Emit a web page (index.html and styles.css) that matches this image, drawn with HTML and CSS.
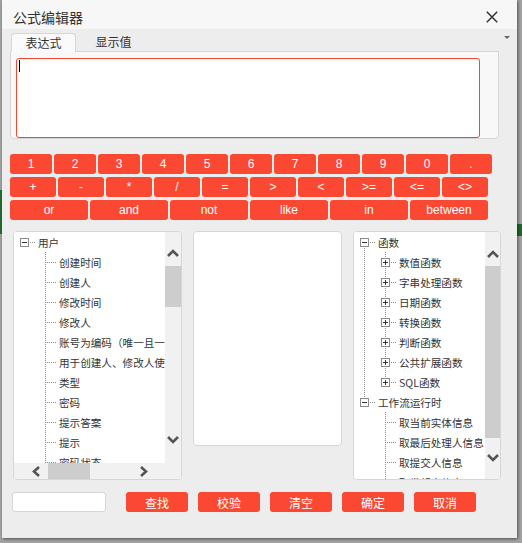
FILE: index.html
```html
<!DOCTYPE html>
<html lang="zh-CN">
<head>
<meta charset="utf-8">
<title>公式编辑器</title>
<link rel="stylesheet" href="styles.css">
</head>
<body>
<svg class="defs" width="0" height="0" aria-hidden="true">
  <defs>
    <symbol id="t-line" viewBox="0 0 21 20">
      <path class="dot" d="M10.5 0V20"/>
    </symbol>
    <symbol id="t-leaf" viewBox="0 0 21 20">
      <path class="dot" d="M10.5 0V20M12 10.5H21"/>
    </symbol>
    <symbol id="t-root" viewBox="0 0 21 20">
      <path class="dot" d="M16 10.5H21"/>
      <rect class="box" x="6.5" y="6.5" width="8" height="8"/>
      <path class="sign" d="M8 10.5H13"/>
    </symbol>
    <symbol id="t-root-first" viewBox="0 0 21 20">
      <path class="dot" d="M16 10.5H21M10.5 16V20"/>
      <rect class="box" x="6.5" y="6.5" width="8" height="8"/>
      <path class="sign" d="M8 10.5H13"/>
    </symbol>
    <symbol id="t-minus-bottom" viewBox="0 0 21 20">
      <path class="dot" d="M16 10.5H21M10.5 0V6"/>
      <rect class="box" x="6.5" y="6.5" width="8" height="8"/>
      <path class="sign" d="M8 10.5H13"/>
    </symbol>
    <symbol id="t-plus-mid" viewBox="0 0 21 20">
      <path class="dot" d="M16 10.5H21M10.5 0V6M10.5 16V20"/>
      <rect class="box" x="6.5" y="6.5" width="8" height="8"/>
      <path class="sign" d="M8 10.5H13M10.5 8V13"/>
    </symbol>
    <symbol id="t-plus-bottom" viewBox="0 0 21 20">
      <path class="dot" d="M16 10.5H21M10.5 0V6"/>
      <rect class="box" x="6.5" y="6.5" width="8" height="8"/>
      <path class="sign" d="M8 10.5H13M10.5 8V13"/>
    </symbol>
    <symbol id="ch-up" viewBox="0 0 12 8">
      <polyline class="chev" points="1,7 6,2 11,7"/>
    </symbol>
    <symbol id="ch-down" viewBox="0 0 12 8">
      <polyline class="chev" points="1,1 6,6 11,1"/>
    </symbol>
    <symbol id="ch-left" viewBox="0 0 8 11">
      <polyline class="chev" points="7,1 2,5.5 7,10"/>
    </symbol>
    <symbol id="ch-right" viewBox="0 0 8 11">
      <polyline class="chev" points="1,1 6,5.5 1,10"/>
    </symbol>
  </defs>
</svg>

<div class="dialog">
  <div class="titlebar">
    <span class="title">公式编辑器</span>
    <svg class="close" width="12" height="12" viewBox="0 0 12 12"><path d="M0.8 0.8L11.2 11.2M11.2 0.8L0.8 11.2"/></svg>
  </div>

  <div class="tabs">
    <div class="tab active">表达式</div>
    <div class="tab second">显示值</div>
    <span class="caret"></span>
  </div>

  <div class="expr">
    <div class="editor"><span class="cursor"></span></div>
  </div>

  <div class="keys">
    <div class="row r11">
      <button class="key">1</button><button class="key">2</button><button class="key">3</button><button class="key">4</button><button class="key">5</button><button class="key">6</button><button class="key">7</button><button class="key">8</button><button class="key">9</button><button class="key">0</button><button class="key">.</button>
    </div>
    <div class="row r10">
      <button class="key">+</button><button class="key">-</button><button class="key">*</button><button class="key">/</button><button class="key">=</button><button class="key">&gt;</button><button class="key">&lt;</button><button class="key">&gt;=</button><button class="key">&lt;=</button><button class="key">&lt;&gt;</button>
    </div>
    <div class="row r6">
      <button class="key">or</button><button class="key">and</button><button class="key">not</button><button class="key">like</button><button class="key">in</button><button class="key">between</button>
    </div>
  </div>

  <div class="lists">
    <div class="panel left">
      <div class="tree">
        <div class="node"><svg><use href="#t-root"/></svg><span>用户</span></div>
        <div class="node"><svg></svg><svg><use href="#t-leaf"/></svg><span>创建时间</span></div>
        <div class="node"><svg></svg><svg><use href="#t-leaf"/></svg><span>创建人</span></div>
        <div class="node"><svg></svg><svg><use href="#t-leaf"/></svg><span>修改时间</span></div>
        <div class="node"><svg></svg><svg><use href="#t-leaf"/></svg><span>修改人</span></div>
        <div class="node"><svg></svg><svg><use href="#t-leaf"/></svg><span>账号为编码（唯一且一致）</span></div>
        <div class="node"><svg></svg><svg><use href="#t-leaf"/></svg><span>用于创建人、修改人使用</span></div>
        <div class="node"><svg></svg><svg><use href="#t-leaf"/></svg><span>类型</span></div>
        <div class="node"><svg></svg><svg><use href="#t-leaf"/></svg><span>密码</span></div>
        <div class="node"><svg></svg><svg><use href="#t-leaf"/></svg><span>提示答案</span></div>
        <div class="node"><svg></svg><svg><use href="#t-leaf"/></svg><span>提示</span></div>
        <div class="node"><svg></svg><svg><use href="#t-leaf"/></svg><span>密码状态</span></div>
      </div>
      <div class="vbar vbar-left">
        <svg class="cv"><use href="#ch-up"/></svg>
        <div class="thumb"></div>
        <div class="grow"></div>
        <svg class="cv"><use href="#ch-down"/></svg>
      </div>
      <div class="hbar">
        <svg class="ch"><use href="#ch-left"/></svg>
        <div class="hthumb"></div>
        <div class="grow"></div>
        <svg class="ch"><use href="#ch-right"/></svg>
      </div>
      <div class="corner"></div>
    </div>

    <div class="panel mid"></div>

    <div class="panel right">
      <div class="tree">
        <div class="node"><svg><use href="#t-root-first"/></svg><span>函数</span></div>
        <div class="node"><svg><use href="#t-line"/></svg><svg><use href="#t-plus-mid"/></svg><span>数值函数</span></div>
        <div class="node"><svg><use href="#t-line"/></svg><svg><use href="#t-plus-mid"/></svg><span>字串处理函数</span></div>
        <div class="node"><svg><use href="#t-line"/></svg><svg><use href="#t-plus-mid"/></svg><span>日期函数</span></div>
        <div class="node"><svg><use href="#t-line"/></svg><svg><use href="#t-plus-mid"/></svg><span>转换函数</span></div>
        <div class="node"><svg><use href="#t-line"/></svg><svg><use href="#t-plus-mid"/></svg><span>判断函数</span></div>
        <div class="node"><svg><use href="#t-line"/></svg><svg><use href="#t-plus-mid"/></svg><span>公共扩展函数</span></div>
        <div class="node"><svg><use href="#t-line"/></svg><svg><use href="#t-plus-bottom"/></svg><span>SQL函数</span></div>
        <div class="node"><svg><use href="#t-minus-bottom"/></svg><span>工作流运行时</span></div>
        <div class="node"><svg></svg><svg><use href="#t-leaf"/></svg><span>取当前实体信息</span></div>
        <div class="node"><svg></svg><svg><use href="#t-leaf"/></svg><span>取最后处理人信息</span></div>
        <div class="node"><svg></svg><svg><use href="#t-leaf"/></svg><span>取提交人信息</span></div>
        <div class="node"><svg></svg><svg><use href="#t-leaf"/></svg><span>取发起人信息</span></div>
      </div>
      <div class="vbar vbar-right">
        <svg class="cv"><use href="#ch-up"/></svg>
        <div class="thumb"></div>
        <div class="grow"></div>
        <svg class="cv"><use href="#ch-down"/></svg>
      </div>
    </div>
  </div>

  <div class="footer">
    <input class="search" type="text">
    <button class="key btn">查找</button>
    <button class="key btn">校验</button>
    <button class="key btn">清空</button>
    <button class="key btn">确定</button>
    <button class="key btn">取消</button>
  </div>
</div>
</body>
</html>
```

FILE: styles.css
```css
html, body {
  margin: 0;
  padding: 0;
}

body {
  width: 522px;
  height: 543px;
  overflow: hidden;
  background:
    linear-gradient(#1e6a2c, #1e6a2c) no-repeat 517px 224px / 5px 12px,
    linear-gradient(#276c31, #276c31) no-repeat 0 190px / 2px 44px,
    #a3a3a3;
  font-family: "Liberation Sans", "Noto Sans CJK SC", sans-serif;
}

.defs {
  position: absolute;
  width: 0;
  height: 0;
  overflow: hidden;
}

.dot {
  fill: none;
  stroke: #8c8c8c;
  stroke-width: 1;
  stroke-dasharray: 1 1;
}

.box {
  fill: #fff;
  stroke: #8a8a8a;
  stroke-width: 1;
}

.sign {
  fill: none;
  stroke: #333;
  stroke-width: 1;
}

.chev {
  fill: none;
  stroke: #555;
  stroke-width: 2.6;
}

.dialog {
  margin-left: 2px;
  width: 515px;
  height: 538px;
  background: #ededed;
  box-shadow: 1px 1px 3px rgba(0, 0, 0, 0.5);
  display: flex;
  flex-direction: column;
  box-sizing: border-box;
}

.titlebar {
  height: 29px;
  flex: none;
  box-sizing: border-box;
  background: #f7f7f7;
  display: flex;
  align-items: center;
  justify-content: space-between;
  padding: 4px 19px 0 11px;
}

.title {
  font-family: "Noto Sans CJK SC", sans-serif;
  font-size: 14px;
  color: #333;
}

.close path {
  fill: none;
  stroke: #333;
  stroke-width: 1.5;
}

.tabs {
  height: 22px;
  flex: none;
  display: flex;
  align-items: flex-end;
  padding-left: 9px;
}

.tab {
  width: 65px;
  height: 18px;
  box-sizing: border-box;
  font-family: "Noto Sans CJK SC", sans-serif;
  font-size: 12px;
  color: #333;
  text-align: center;
  line-height: 18px;
}

.tab.active {
  height: 19px;
  margin-bottom: -1px;
  position: relative;
  z-index: 1;
  background: #fafafa;
  border: 1px solid #d6d6d6;
  border-bottom: none;
  border-radius: 4px 4px 0 0;
  line-height: 18px;
}

.tab.second {
  margin-left: 5px;
}

.caret {
  margin-left: auto;
  margin-right: 7px;
  align-self: flex-start;
  margin-top: 7px;
  width: 0;
  height: 0;
  border-left: 3px solid transparent;
  border-right: 3px solid transparent;
  border-top: 3px solid #666;
}

.expr {
  margin-left: 8px;
  width: 489px;
  height: 88px;
  flex: none;
  box-sizing: border-box;
  border: 1px solid #d6d6d6;
  border-radius: 0 0 4px 4px;
  background: #f8f8f8;
  padding: 6px 0 0 5px;
}

.editor {
  width: 464px;
  height: 80px;
  box-sizing: border-box;
  border: 1px solid #f4472f;
  border-radius: 3px;
  background: #fff;
  padding: 1px 0 0 2px;
}

.cursor {
  display: block;
  width: 1px;
  height: 12px;
  background: #000;
}

.keys {
  margin-top: 15px;
  padding-left: 8px;
  display: flex;
  flex-direction: column;
  gap: 3px;
}

.row {
  display: flex;
  gap: 2px;
}

.key {
  height: 20px;
  margin: 0;
  padding: 0;
  border: 0;
  border-radius: 3px;
  background: #fa4832;
  color: #fff;
  font-family: "Liberation Sans", "Noto Sans CJK SC", sans-serif;
  font-size: 12px;
  display: flex;
  align-items: center;
  justify-content: center;
}

.r11 .key { width: 42px; }
.r10 .key { width: 46px; }
.r6 .key { width: 78px; }

.lists {
  margin-top: 11px;
  padding-left: 11px;
  display: flex;
  align-items: flex-start;
  gap: 11px;
}

.panel {
  border: 1px solid #d6d6d6;
  border-radius: 4px;
  background: #fff;
  box-sizing: border-box;
  overflow: hidden;
}

.left {
  width: 169px;
  height: 249px;
  display: grid;
  grid-template-columns: 151px 16px;
  grid-template-rows: 231px 16px;
}

.mid {
  width: 149px;
  height: 215px;
}

.right {
  width: 148px;
  height: 249px;
  display: grid;
  grid-template-columns: 131px 15px;
  grid-template-rows: 247px;
}

.tree {
  overflow: hidden;
  background: #fff;
}

.node {
  display: flex;
  align-items: center;
  height: 20px;
  white-space: nowrap;
  font-family: "Noto Sans CJK SC", sans-serif;
  font-size: 10.6px;
  color: #333;
}

.node svg {
  width: 21px;
  height: 20px;
  flex: none;
}

.node span {
  margin-left: 3px;
}

.vbar {
  background: #f1f1f1;
  display: flex;
  flex-direction: column;
  align-items: center;
}

.vbar-left {
  padding: 17px 0 19px;
}

.vbar-right {
  padding: 18px 0 17px;
}

.cv {
  width: 12px;
  height: 8px;
  flex: none;
}

.thumb {
  align-self: stretch;
  background: #cdcdcd;
  flex: none;
}

.vbar-left .thumb {
  margin-top: 9px;
  height: 41px;
}

.vbar-right .thumb {
  margin-top: 8px;
  height: 172px;
}

.grow {
  flex: 1;
}

.hbar {
  background: #f1f1f1;
  display: flex;
  align-items: center;
  padding: 0 17px 0 18px;
}

.ch {
  width: 8px;
  height: 11px;
  flex: none;
}

.hthumb {
  margin-left: 8px;
  width: 42px;
  align-self: stretch;
  background: #cdcdcd;
  flex: none;
}

.corner {
  background: #f1f1f1;
}

.footer {
  margin-top: 12px;
  padding-left: 10px;
  display: flex;
  align-items: center;
}

.search {
  width: 94px;
  height: 20px;
  margin: 0 20px 0 0;
  padding: 0;
  box-sizing: border-box;
  border: 1px solid #d6d6d6;
  border-radius: 3px;
  background: #fff;
}

.btn {
  width: 62px;
  margin-right: 10px;
  font-family: "Noto Sans CJK SC", sans-serif;
}
```
